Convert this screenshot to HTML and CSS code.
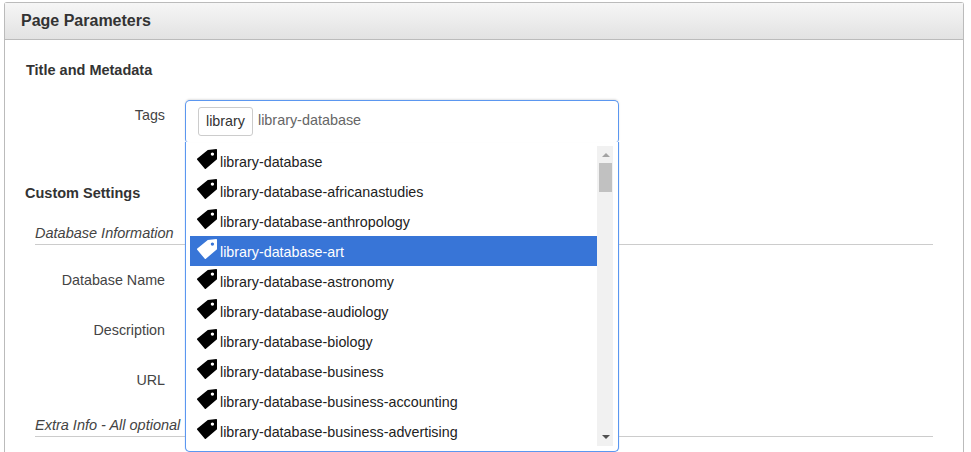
FILE: index.html
```html
<!DOCTYPE html>
<html lang="en">
<head>
    <meta charset="UTF-8">
    <title>Page Parameters</title>
    <link rel="stylesheet" href="styles.css">
</head>
<body>
    <svg class="defs" width="0" height="0">
        <symbol id="tag" viewBox="0 0 20 20">
            <path fill-rule="evenodd" d="M0 9.8 10.8 1 19.4 0 20 .6V10.2L8.6 20H8L0 10.6ZM15.4 3.4A1.7 1.7 0 1 0 15.4 6.8 1.7 1.7 0 1 0 15.4 3.4Z"/>
        </symbol>
    </svg>
    <div class="panel">
        <div class="panel-heading">Page Parameters</div>
        <div class="panel-body">
            <h4 class="group-title">Title and Metadata</h4>
            <div class="form-row tags-row">
                <label>Tags</label>
                <div class="tag-select">
                    <div class="tag-input">
                        <span class="chip">library</span>
                        <span class="typed">library-database</span>
                    </div>
                    <div class="dropdown">
                        <ul class="options">
                            <li><svg class="tag-icon"><use href="#tag"/></svg>library-database</li>
                            <li><svg class="tag-icon"><use href="#tag"/></svg>library-database-africanastudies</li>
                            <li><svg class="tag-icon"><use href="#tag"/></svg>library-database-anthropology</li>
                            <li class="active"><svg class="tag-icon"><use href="#tag"/></svg>library-database-art</li>
                            <li><svg class="tag-icon"><use href="#tag"/></svg>library-database-astronomy</li>
                            <li><svg class="tag-icon"><use href="#tag"/></svg>library-database-audiology</li>
                            <li><svg class="tag-icon"><use href="#tag"/></svg>library-database-biology</li>
                            <li><svg class="tag-icon"><use href="#tag"/></svg>library-database-business</li>
                            <li><svg class="tag-icon"><use href="#tag"/></svg>library-database-business-accounting</li>
                            <li><svg class="tag-icon"><use href="#tag"/></svg>library-database-business-advertising</li>
                        </ul>
                        <div class="scrollbar">
                            <span class="arrow-up"></span>
                            <span class="thumb"></span>
                            <span class="arrow-down"></span>
                        </div>
                    </div>
                </div>
            </div>
            <h4 class="group-title custom">Custom Settings</h4>
            <div class="legend">Database Information</div>
            <div class="form-row first"><label>Database Name</label></div>
            <div class="form-row"><label>Description</label></div>
            <div class="form-row"><label>URL</label></div>
            <div class="legend extra">Extra Info - All optional</div>
        </div>
    </div>
</body>
</html>
```

FILE: styles.css
```css
html, body {
    height: 452px;
    overflow: hidden;
}
body {
    margin: 0;
    padding: 2px 7px 0 4px;
    font-family: "Liberation Sans", Arial, sans-serif;
    font-size: 14.3px;
    color: #333;
    background: #fff;
}
.defs {
    position: absolute;
}
.panel {
    border: 1px solid #bbb;
    border-bottom: 0;
    border-radius: 3px 3px 0 0;
    height: 460px;
}
.panel-heading {
    height: 36px;
    line-height: 35px;
    padding-left: 16px;
    font-size: 16px;
    font-weight: bold;
    color: #333;
    background: linear-gradient(#f6f6f6, #e2e2e2);
    border-bottom: 1px solid #bbb;
}
.panel-body {
    padding: 21px 30px 0 21px;
}
.group-title {
    margin: 0;
    font-size: 14.5px;
    line-height: 18px;
    font-weight: bold;
}
.form-row {
    display: flex;
    height: 50px;
}
.form-row label {
    width: 139px;
    text-align: right;
    color: #444;
    line-height: 20px;
}
.tags-row {
    margin-top: 26px;
    height: 79px;
}
.tag-select {
    position: relative;
    margin-left: 20px;
    width: 434px;
}
.tag-input {
    position: absolute;
    top: -5px;
    left: 0;
    right: 0;
    z-index: 2;
    box-sizing: border-box;
    height: 42px;
    padding: 6px 12px;
    display: flex;
    align-items: flex-start;
    gap: 5px;
    background: #fff;
    border: 1px solid #5b97f0;
    border-bottom: 0;
    border-radius: 5px 5px 3px 3px;
    box-shadow: 0 -1px 2px rgba(0, 0, 0, .12);
}
.chip {
    box-sizing: border-box;
    height: 29px;
    line-height: 27px;
    padding: 0 7px;
    border: 1px solid #ccc;
    border-radius: 3px;
}
.typed {
    line-height: 26px;
    font-size: 14.4px;
    color: #666;
}
.dropdown {
    position: absolute;
    top: 37px;
    left: 0;
    right: 0;
    z-index: 1;
    box-sizing: border-box;
    height: 310px;
    padding: 4px 5px 0 4px;
    display: flex;
    background: #fff;
    border: 1px solid #5b97f0;
    border-top: 0;
    border-radius: 0 0 5px 5px;
    box-shadow: 0 0 1px #5b97f0;
}
.options {
    list-style: none;
    margin: 0;
    padding: 0;
    width: 407px;
    flex: none;
}
.options li {
    display: flex;
    height: 30px;
    line-height: 33px;
    color: #222;
}
.options li.active {
    background: #3875d7;
    color: #fff;
}
.tag-icon {
    width: 20px;
    height: 20px;
    margin: 3px 3px 0 7px;
    fill: #000;
}
.active .tag-icon {
    fill: #fff;
}
.scrollbar {
    position: relative;
    width: 17px;
    height: 300px;
    background: #f1f1f1;
}
.thumb {
    position: absolute;
    top: 17px;
    left: 2px;
    width: 13px;
    height: 29px;
    background: #c1c1c1;
}
.arrow-up, .arrow-down {
    position: absolute;
    left: 5px;
    width: 0;
    height: 0;
    border-left: 4px solid transparent;
    border-right: 4px solid transparent;
}
.arrow-up {
    top: 7px;
    border-bottom: 4px solid #a3a3a3;
}
.arrow-down {
    bottom: 7px;
    border-top: 4px solid #505050;
}
.custom {
    margin-left: -1px;
}
.legend {
    margin: 20px 0 0 9px;
    height: 22px;
    line-height: 23px;
    font-size: 14.5px;
    font-style: italic;
    color: #444;
    border-bottom: 1px solid #ccc;
}
.form-row.first {
    margin-top: 25px;
}
.legend.extra {
    margin-top: -6px;
}
```
